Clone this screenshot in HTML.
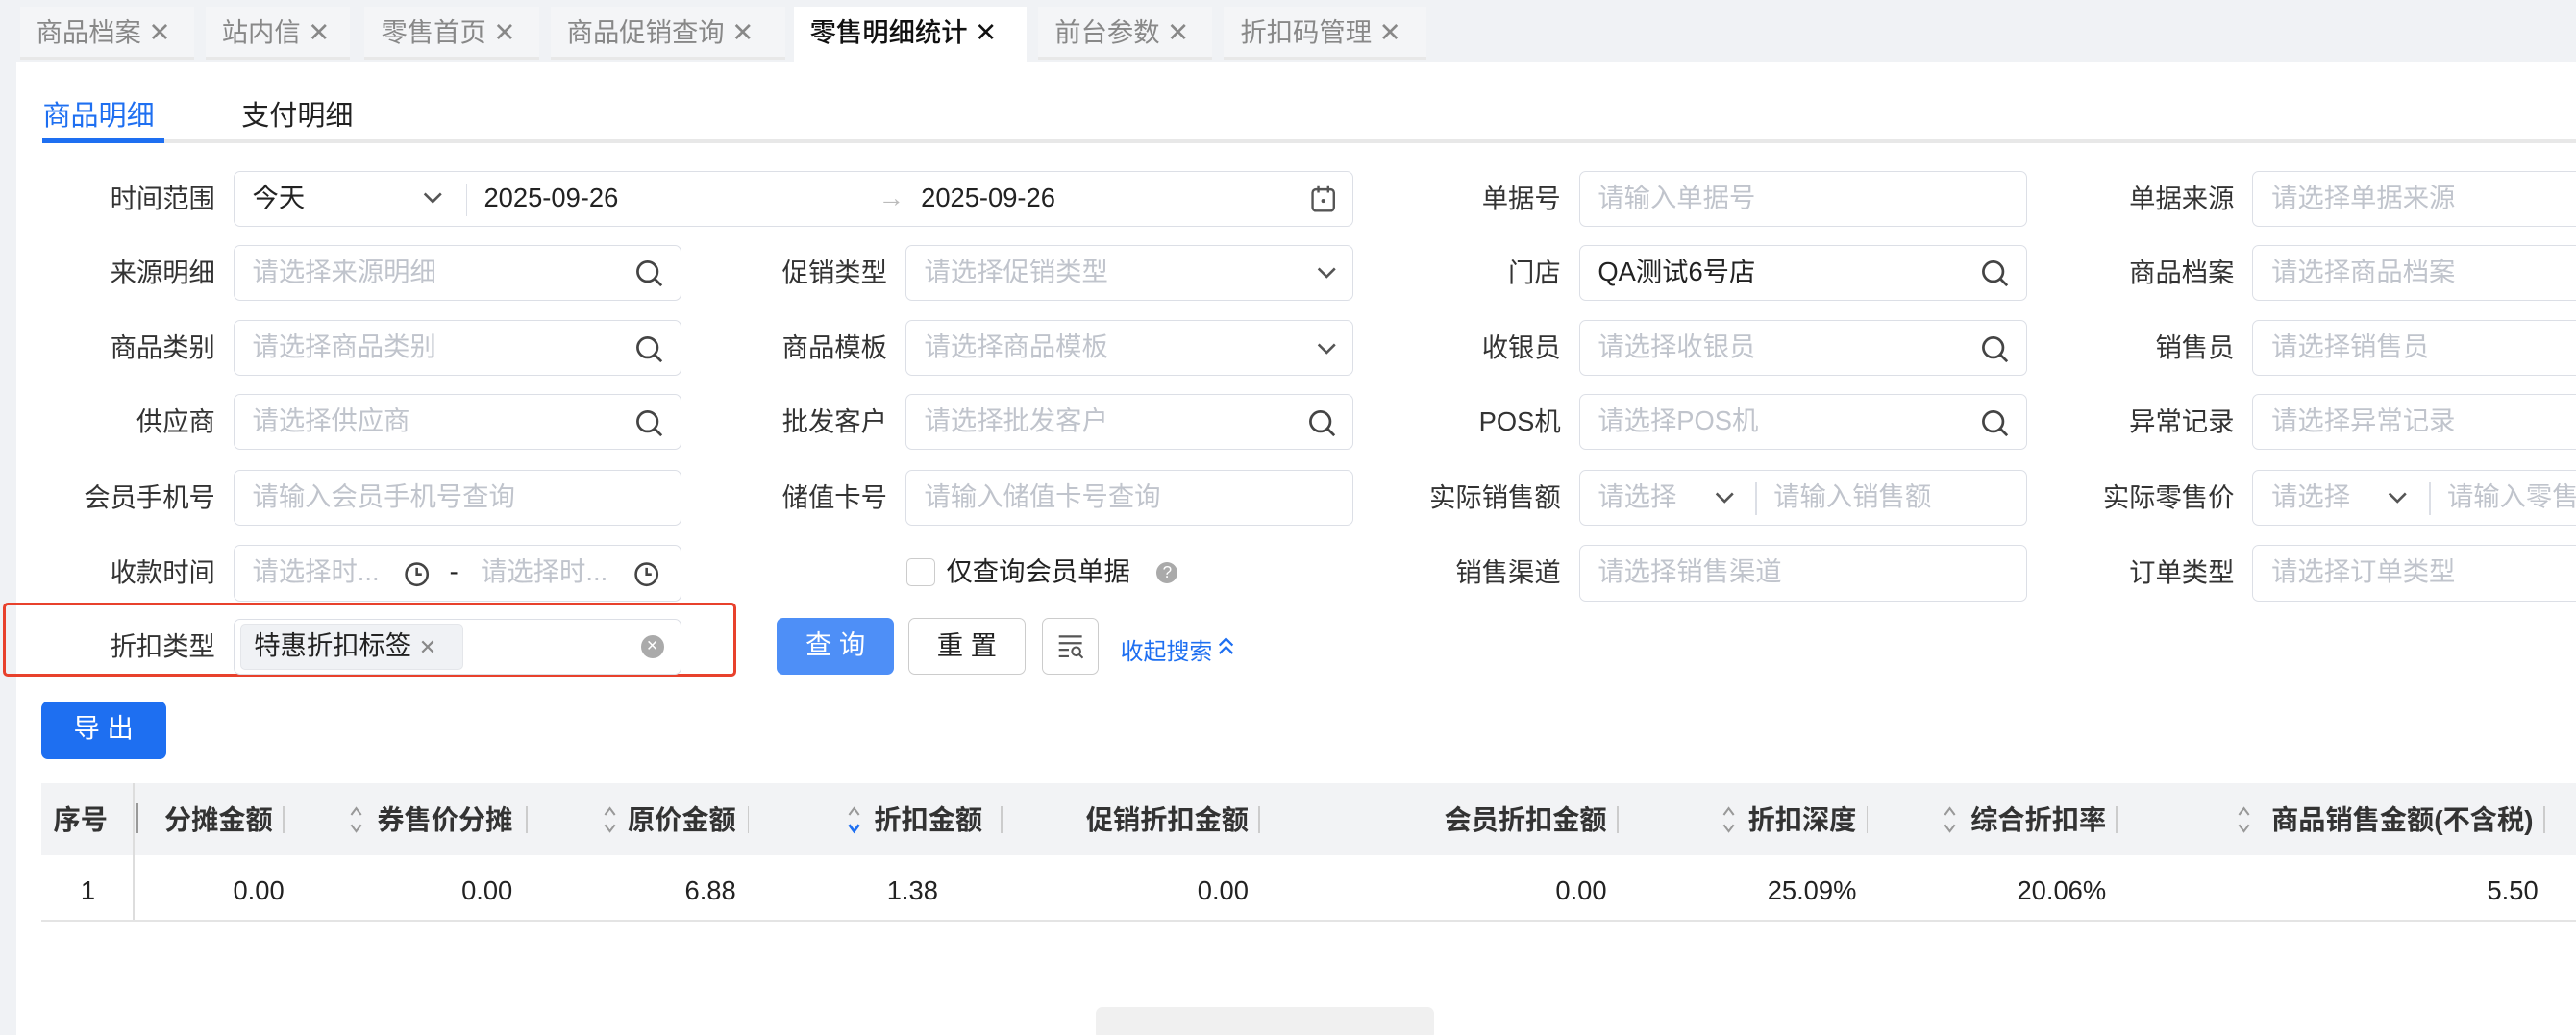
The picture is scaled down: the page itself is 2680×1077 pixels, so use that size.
<!DOCTYPE html>
<html><head><meta charset="utf-8"><style>
*{margin:0;padding:0;box-sizing:border-box}
html,body{width:2680px;height:1077px;overflow:hidden;background:#fff}
#w{zoom:1.70918;width:1568px;height:630px;position:relative;background:#f0f2f5;font-family:"Liberation Sans","Noto Sans CJK SC",sans-serif;font-size:16px;color:#222}
.a{position:absolute;white-space:nowrap}
.tab{position:absolute;top:4px;height:32px;background:#f4f5f7;border-bottom:2px solid #e8e8e8;color:#888;font-size:16px;line-height:32px;padding-left:10px}
.tab.on{background:#fff;color:#111;border:none;height:34px;font-weight:500}
.main{position:absolute;left:10px;top:38px;width:1558px;height:592px;background:#fff}
.lab{position:absolute;text-align:right;width:120px;line-height:34px;color:#333}
.inp{position:absolute;height:34px;border:1px solid #dcdfe6;border-radius:4px;background:#fff;line-height:32px;padding-left:11px;color:#c0c4cc}
.inp.v{color:#222}
.ic{position:absolute;right:10px;top:8px}
.btn{position:absolute;border-radius:4px;text-align:center;line-height:33px;font-size:16px}
.th{position:absolute;top:486px;font-weight:bold;color:#333;line-height:26px;font-size:16.5px}
.sep{position:absolute;top:491px;width:1px;height:16px;background:#ccc}
.td{position:absolute;top:531px;line-height:22px;color:#222}
.so{position:absolute;top:489px}
</style></head><body><div id="w">
<div class="tab" style="left:12px;width:106px">商品档案 ✕</div>
<div class="tab" style="left:125px;width:88px">站内信 ✕</div>
<div class="tab" style="left:222px;width:106px">零售首页 ✕</div>
<div class="tab" style="left:335px;width:143px">商品促销查询 ✕</div>
<div class="tab on" style="left:483px;width:142px">零售明细统计 ✕</div>
<div class="tab" style="left:632px;width:106px">前台参数 ✕</div>
<div class="tab" style="left:745px;width:123px">折扣码管理 ✕</div>
<div class="main"></div>
<div class="a" style="left:26px;top:57px;color:#1e6ff1;font-size:17px">商品明细</div>
<div class="a" style="left:147px;top:57px;color:#222;font-size:17px">支付明细</div>
<div class="a" style="left:26px;top:85px;width:1542px;height:2px;background:#e8e8e8"></div>
<div class="a" style="left:26px;top:84px;width:74px;height:3px;background:#1e6ff1"></div>

<div class="lab" style="left:11px;top:104px">时间范围</div>
<div class="lab" style="left:11px;top:149px">来源明细</div>
<div class="lab" style="left:11px;top:195px">商品类别</div>
<div class="lab" style="left:11px;top:240px">供应商</div>
<div class="lab" style="left:11px;top:286px">会员手机号</div>
<div class="lab" style="left:11px;top:332px">收款时间</div>
<div class="lab" style="left:11px;top:377px">折扣类型</div>
<div class="lab" style="left:420px;top:149px">促销类型</div>
<div class="lab" style="left:420px;top:195px">商品模板</div>
<div class="lab" style="left:420px;top:240px">批发客户</div>
<div class="lab" style="left:420px;top:286px">储值卡号</div>
<div class="lab" style="left:830px;top:104px">单据号</div>
<div class="lab" style="left:830px;top:149px">门店</div>
<div class="lab" style="left:830px;top:195px">收银员</div>
<div class="lab" style="left:830px;top:240px">POS机</div>
<div class="lab" style="left:830px;top:286px">实际销售额</div>
<div class="lab" style="left:830px;top:332px">销售渠道</div>
<div class="lab" style="left:1240px;top:104px">单据来源</div>
<div class="lab" style="left:1240px;top:149px">商品档案</div>
<div class="lab" style="left:1240px;top:195px">销售员</div>
<div class="lab" style="left:1240px;top:240px">异常记录</div>
<div class="lab" style="left:1240px;top:286px">实际零售价</div>
<div class="lab" style="left:1240px;top:332px">订单类型</div>

<div class="inp v" style="left:142px;top:104px;width:682px">今天
 <svg class="a" style="left:115px;top:11px" width="12" height="10"><path d="M1 2l5 5 5-5" stroke="#555" stroke-width="1.5" fill="none"/></svg>
 <div class="a" style="left:141px;top:7px;width:1px;height:20px;background:#dcdfe6"></div>
 <span class="a" style="left:152px">2025-09-26</span>
 <span class="a" style="left:392px;color:#bbb">→</span>
 <span class="a" style="left:418px">2025-09-26</span>
 <svg class="ic" width="16" height="18"><rect x="1.5" y="3" width="13" height="13" rx="2" stroke="#555" stroke-width="1.4" fill="none"/><path d="M5 1v4M11 1v4" stroke="#555" stroke-width="1.4"/><circle cx="8" cy="10" r="1.2" fill="#555"/></svg>
</div>
<div class="inp" style="left:961px;top:104px;width:273px">请输入单据号</div>
<div class="inp" style="left:1371px;top:104px;width:210px">请选择单据来源</div>

<div class="inp" style="left:142px;top:149px;width:273px">请选择来源明细<svg class="ic" width="18" height="18"><circle cx="8" cy="8" r="6" stroke="#444" stroke-width="1.6" fill="none"/><path d="M12.5 12.5l4 4" stroke="#444" stroke-width="1.6"/></svg></div>
<div class="inp" style="left:551px;top:149px;width:273px">请选择促销类型<svg class="ic" style="top:12px" width="12" height="10"><path d="M1 2l5 5 5-5" stroke="#555" stroke-width="1.5" fill="none"/></svg></div>
<div class="inp v" style="left:961px;top:149px;width:273px">QA测试6号店<svg class="ic" width="18" height="18"><circle cx="8" cy="8" r="6" stroke="#444" stroke-width="1.6" fill="none"/><path d="M12.5 12.5l4 4" stroke="#444" stroke-width="1.6"/></svg></div>
<div class="inp" style="left:1371px;top:149px;width:210px">请选择商品档案</div>

<div class="inp" style="left:142px;top:195px;width:273px">请选择商品类别<svg class="ic" width="18" height="18"><circle cx="8" cy="8" r="6" stroke="#444" stroke-width="1.6" fill="none"/><path d="M12.5 12.5l4 4" stroke="#444" stroke-width="1.6"/></svg></div>
<div class="inp" style="left:551px;top:195px;width:273px">请选择商品模板<svg class="ic" style="top:12px" width="12" height="10"><path d="M1 2l5 5 5-5" stroke="#555" stroke-width="1.5" fill="none"/></svg></div>
<div class="inp" style="left:961px;top:195px;width:273px">请选择收银员<svg class="ic" width="18" height="18"><circle cx="8" cy="8" r="6" stroke="#444" stroke-width="1.6" fill="none"/><path d="M12.5 12.5l4 4" stroke="#444" stroke-width="1.6"/></svg></div>
<div class="inp" style="left:1371px;top:195px;width:210px">请选择销售员</div>

<div class="inp" style="left:142px;top:240px;width:273px">请选择供应商<svg class="ic" width="18" height="18"><circle cx="8" cy="8" r="6" stroke="#444" stroke-width="1.6" fill="none"/><path d="M12.5 12.5l4 4" stroke="#444" stroke-width="1.6"/></svg></div>
<div class="inp" style="left:551px;top:240px;width:273px">请选择批发客户<svg class="ic" width="18" height="18"><circle cx="8" cy="8" r="6" stroke="#444" stroke-width="1.6" fill="none"/><path d="M12.5 12.5l4 4" stroke="#444" stroke-width="1.6"/></svg></div>
<div class="inp" style="left:961px;top:240px;width:273px">请选择POS机<svg class="ic" width="18" height="18"><circle cx="8" cy="8" r="6" stroke="#444" stroke-width="1.6" fill="none"/><path d="M12.5 12.5l4 4" stroke="#444" stroke-width="1.6"/></svg></div>
<div class="inp" style="left:1371px;top:240px;width:210px">请选择异常记录</div>

<div class="inp" style="left:142px;top:286px;width:273px">请输入会员手机号查询</div>
<div class="inp" style="left:551px;top:286px;width:273px">请输入储值卡号查询</div>
<div class="inp" style="left:961px;top:286px;width:273px">请选择<svg class="a" style="left:82px;top:12px" width="12" height="10"><path d="M1 2l5 5 5-5" stroke="#555" stroke-width="1.5" fill="none"/></svg><div class="a" style="left:107px;top:7px;width:1px;height:20px;background:#dcdfe6"></div><span class="a" style="left:118px">请输入销售额</span></div>
<div class="inp" style="left:1371px;top:286px;width:210px">请选择<svg class="a" style="left:82px;top:12px" width="12" height="10"><path d="M1 2l5 5 5-5" stroke="#555" stroke-width="1.5" fill="none"/></svg><div class="a" style="left:107px;top:7px;width:1px;height:20px;background:#dcdfe6"></div><span class="a" style="left:118px">请输入零售价</span></div>

<div class="inp" style="left:142px;top:332px;width:273px">请选择时...<svg class="a" style="left:103px;top:9px" width="16" height="16"><circle cx="8" cy="8" r="6.5" stroke="#444" stroke-width="1.5" fill="none"/><path d="M8 4v4h3" stroke="#444" stroke-width="1.5" fill="none"/></svg><span class="a" style="left:131px;color:#222">-</span><span class="a" style="left:150px">请选择时...</span><svg class="a" style="left:243px;top:9px" width="16" height="16"><circle cx="8" cy="8" r="6.5" stroke="#444" stroke-width="1.5" fill="none"/><path d="M8 4v4h3" stroke="#444" stroke-width="1.5" fill="none"/></svg></div>
<div class="a" style="left:552px;top:340px;width:17px;height:17px;border:1px solid #ccc;border-radius:3px"></div>
<div class="a" style="left:576px;top:337px;line-height:22px">仅查询会员单据</div>
<div class="a" style="left:704px;top:342px;width:13px;height:13px;border-radius:50%;background:#aaa;color:#fff;font-size:10px;text-align:center;line-height:13px">?</div>
<div class="inp" style="left:961px;top:332px;width:273px">请选择销售渠道</div>
<div class="inp" style="left:1371px;top:332px;width:210px">请选择订单类型</div>

<div class="a" style="left:2px;top:367px;width:446px;height:45px;border:2px solid #e8412c;border-radius:3px"></div>
<div class="inp" style="left:142px;top:377px;width:273px;padding:0"></div>
<div class="a" style="left:146px;top:380px;width:136px;height:28px;background:#f0f2f5;border:1px solid #e4e6ea;border-radius:3px;line-height:26px;padding-left:8px;color:#222">特惠折扣标签 <span style="color:#888;font-size:13px">✕</span></div>
<div class="a" style="left:390px;top:387px;width:14px;height:14px;border-radius:50%;background:#aaa;color:#fff;font-size:9px;line-height:14px;text-align:center">✕</div>

<div class="btn a" style="left:473px;top:376px;width:71px;height:35px;background:#4e8ff7;color:#fff">查 询</div>
<div class="btn a" style="left:553px;top:376px;width:71px;height:35px;border:1px solid #ccc;color:#222">重 置</div>
<div class="btn a" style="left:634px;top:376px;width:35px;height:35px;border:1px solid #ccc"><svg width="16" height="16" style="margin-top:9px"><path d="M1 2h14M1 6h14M1 10h6M1 14h6" stroke="#555" stroke-width="1.3"/><circle cx="11.5" cy="11" r="2.5" stroke="#555" stroke-width="1.2" fill="none"/><path d="M13.5 13l2 2" stroke="#555" stroke-width="1.2"/></svg></div>
<div class="a" style="left:682px;top:385px;color:#1e6ff1;font-size:14px">收起搜索</div>
<svg class="a" style="left:741px;top:388px" width="10" height="12"><path d="M1 5l4-4 4 4M1 10l4-4 4 4" stroke="#1e6ff1" stroke-width="1.3" fill="none"/></svg>

<div class="btn a" style="left:25px;top:427px;width:76px;height:35px;background:#1e6ff1;color:#fff">导 出</div>

<div class="a" style="left:25px;top:477px;width:1543px;height:44px;background:#f2f3f5"></div>
<div class="a" style="left:81px;top:477px;width:1px;height:84px;background:#ddd"></div>
<div class="a" style="left:25px;top:560px;width:1543px;height:1px;background:#e4e4e4"></div>
<div class="th" style="left:25px;width:48px;text-align:center">序号</div>
<div class="th" style="right:1402px">分摊金额</div><div class="sep" style="left:172px"></div>
<div class="th" style="right:1256px">券售价分摊</div><div class="sep" style="left:320px"></div>
<div class="th" style="right:1120px">原价金额</div><div class="sep" style="left:455px"></div>
<div class="th" style="right:970px">折扣金额</div><div class="sep" style="left:609px"></div>
<div class="th" style="right:808px">促销折扣金额</div><div class="sep" style="left:766px"></div>
<div class="th" style="right:590px">会员折扣金额</div><div class="sep" style="left:984px"></div>
<div class="th" style="right:438px">折扣深度</div><div class="sep" style="left:1136px"></div>
<div class="th" style="right:286px">综合折扣率</div><div class="sep" style="left:1288px"></div>
<div class="th" style="right:26px">商品销售金额(不含税)</div><div class="sep" style="left:1548px"></div>

<svg class="so" style="left:212px" width="10" height="20"><path d="M2 7l3-4 3 4" stroke="#999" stroke-width="1.2" fill="none"/><path d="M2 13l3 4 3-4" stroke="#999" stroke-width="1.2" fill="none"/></svg>
<svg class="so" style="left:366px" width="10" height="20"><path d="M2 7l3-4 3 4" stroke="#999" stroke-width="1.2" fill="none"/><path d="M2 13l3 4 3-4" stroke="#999" stroke-width="1.2" fill="none"/></svg>
<svg class="so" style="left:515px" width="10" height="20"><path d="M2 7l3-4 3 4" stroke="#999" stroke-width="1.2" fill="none"/><path d="M2 13l3 4 3-4" stroke="#1e6ff1" stroke-width="1.6" fill="none"/></svg>
<svg class="so" style="left:1047px" width="10" height="20"><path d="M2 7l3-4 3 4" stroke="#999" stroke-width="1.2" fill="none"/><path d="M2 13l3 4 3-4" stroke="#999" stroke-width="1.2" fill="none"/></svg>
<svg class="so" style="left:1182px" width="10" height="20"><path d="M2 7l3-4 3 4" stroke="#999" stroke-width="1.2" fill="none"/><path d="M2 13l3 4 3-4" stroke="#999" stroke-width="1.2" fill="none"/></svg>
<svg class="so" style="left:1361px" width="10" height="20"><path d="M2 7l3-4 3 4" stroke="#999" stroke-width="1.2" fill="none"/><path d="M2 13l3 4 3-4" stroke="#999" stroke-width="1.2" fill="none"/></svg>
<div class="a" style="left:83px;top:489px;width:1px;height:18px;background:#999"></div>

<div class="td" style="left:25px;width:57px;text-align:center">1</div>
<div class="td" style="right:1395px">0.00</div>
<div class="td" style="right:1256px">0.00</div>
<div class="td" style="right:1120px">6.88</div>
<div class="td" style="right:997px">1.38</div>
<div class="td" style="right:808px">0.00</div>
<div class="td" style="right:590px">0.00</div>
<div class="td" style="right:438px">25.09%</div>
<div class="td" style="right:286px">20.06%</div>
<div class="td" style="right:23px">5.50</div>

<div class="a" style="left:667px;top:613px;width:206px;height:20px;background:#f0f0f0;border-radius:4px"></div>
</div></body></html>
